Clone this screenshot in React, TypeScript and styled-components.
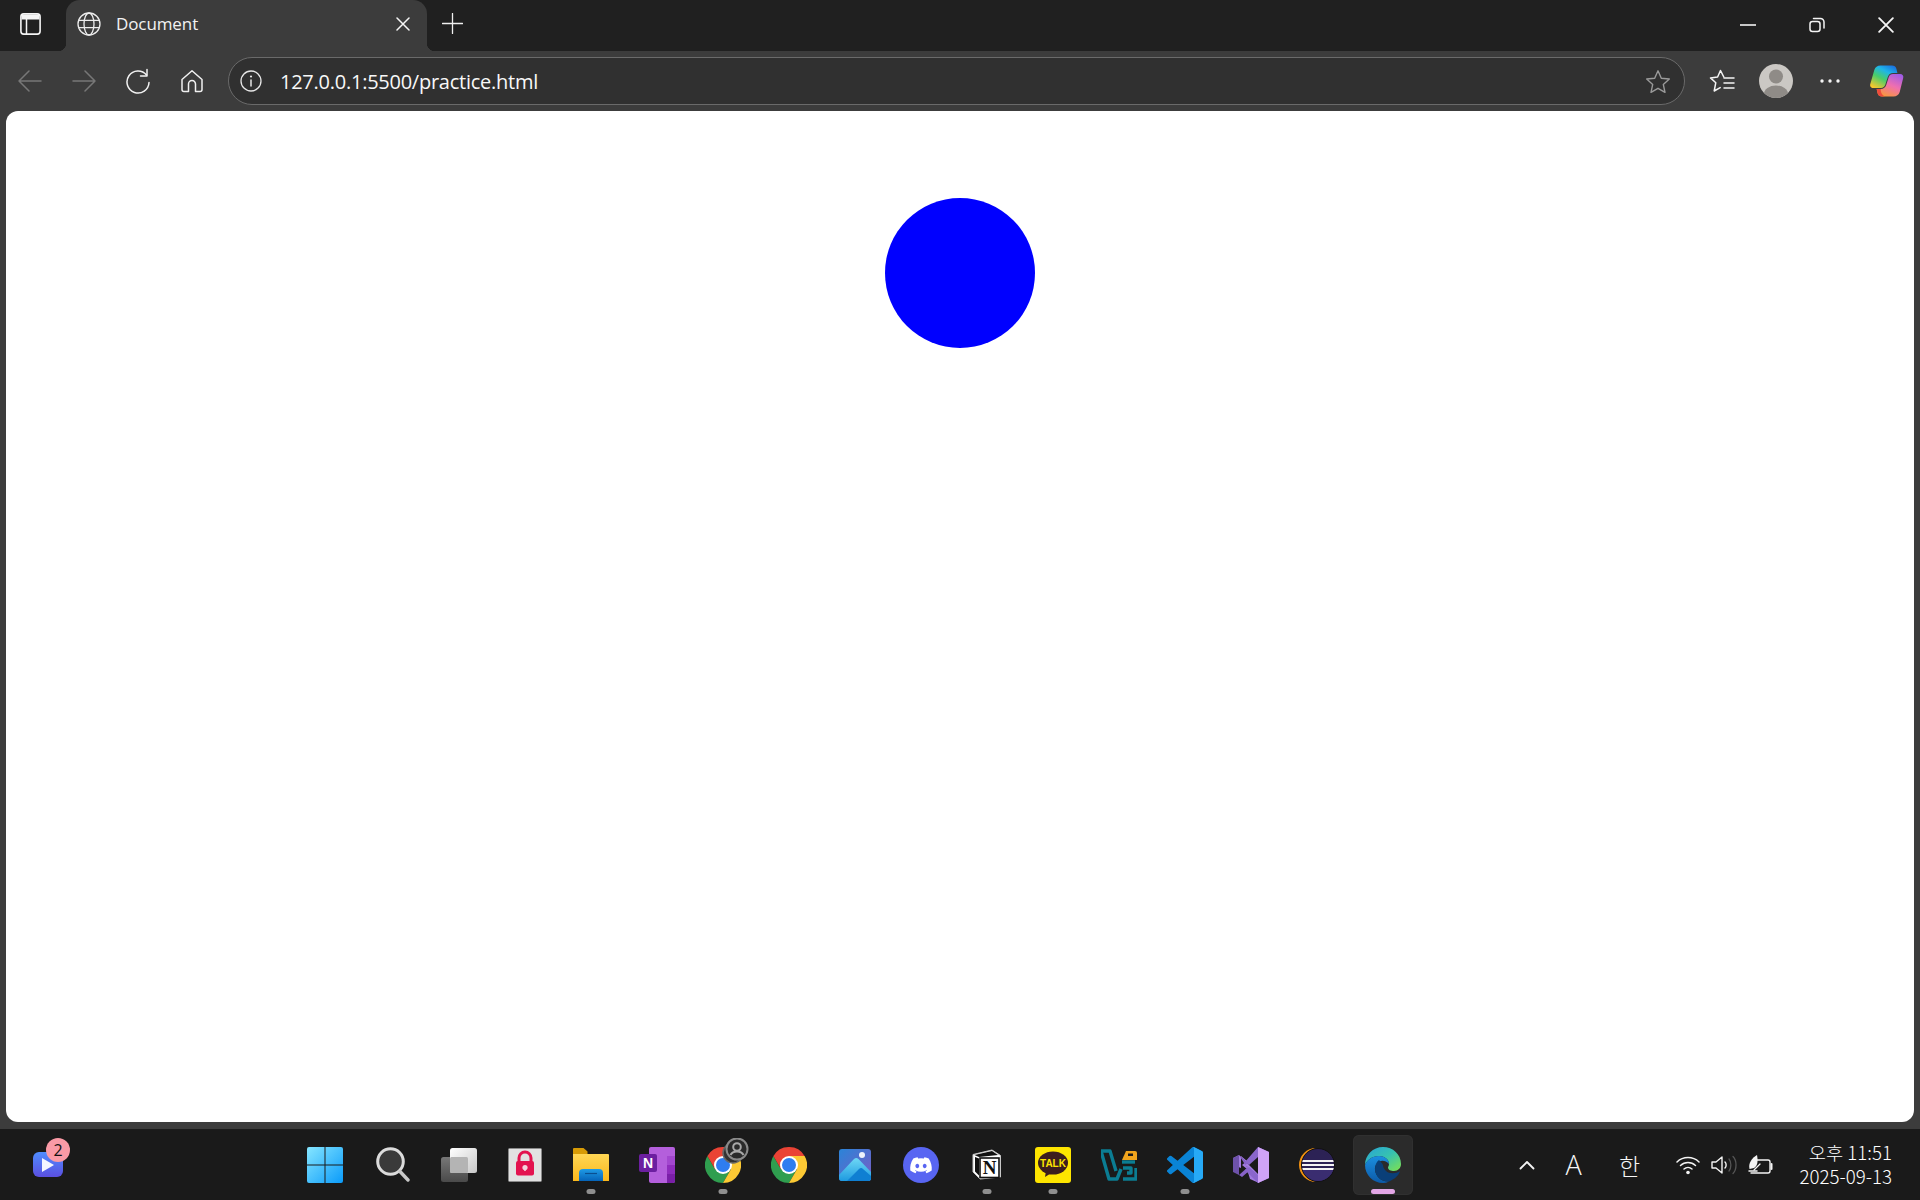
import React from "react";
import styled, { createGlobalStyle } from "styled-components";

const Global = createGlobalStyle`
  html, body { margin: 0; padding: 0; background: #1a1a1a; }
  #root { width: 1920px; height: 1200px; overflow: hidden; }
  * { box-sizing: border-box; }
`;

const Page = styled.div`
  width: 1920px; height: 1200px; display: flex; flex-direction: column;
  font-family: "Open Sans", "Liberation Sans", sans-serif; color: #fff;
`;
const TabStrip = styled.header`
  height: 51px; background: #202020; display: flex; flex: none;
`;
const SidebarButton = styled.div`
  width: 66px; height: 48px; display: flex; align-items: center; justify-content: center; padding-right: 6px;
`;
const Tab = styled.div`
  position: relative; width: 361px; height: 51px; background: #3c3c3c; border-radius: 14px 14px 0 0;
  display: flex; align-items: center; padding: 0 17px 3px 11px;
  &::before, &::after { content: ""; position: absolute; bottom: 0; width: 8px; height: 8px; }
  &::before { left: -8px; background: radial-gradient(circle at 0 0, transparent 8px, #3c3c3c 8.5px); }
  &::after { right: -8px; background: radial-gradient(circle at 100% 0, transparent 8px, #3c3c3c 8.5px); }
`;
const TabTitle = styled.span`
  flex: 1; margin: 0 0 2px 15px; font-size: 17px; color: #f2f2f2; letter-spacing: -0.1px;
`;
const NewTab = styled.div`
  width: 50px; height: 46px; display: flex; align-items: center; justify-content: center;
`;
const WindowControls = styled.div` margin-left: auto; display: flex; `;
const WindowButton = styled.div`
  width: 69px; height: 49px; display: flex; align-items: center; justify-content: center;
`;
const Toolbar = styled.nav`
  height: 60px; background: #3c3c3c; display: flex; align-items: center; padding: 0 9px 0 3px; flex: none;
`;
const NavButton = styled.div`
  width: 54px; height: 48px; display: flex; align-items: center; justify-content: center;
`;
const AddressBar = styled.div`
  flex: 1; height: 48px; margin: 0 10px 0 9px; border-radius: 24px; background: #303030; border: 1.5px solid #6a6a6a;
  display: flex; align-items: center; padding: 0 13px 0 11px;
`;
const UrlText = styled.span`
  flex: 1; margin-left: 18px; font-size: 20px; color: #f8f8f8; letter-spacing: -0.25px;
  font-family: "Open Sans", sans-serif;
`;
const ToolButton = styled.div<{ $nudge?: number }>`
  width: 54px; height: 48px; display: flex; align-items: center; justify-content: center;
  padding-left: ${(p) => p.$nudge ?? 0}px;
`;
const ContentFrame = styled.main`
  flex: 1; background: #3c3c3c; padding: 0 6px 7px; display: flex; min-height: 0;
`;
const Viewport = styled.section`
  flex: 1; background: #fff; border-radius: 12px; display: flex; justify-content: center; padding-top: 87px;
`;
const Circle = styled.div`
  width: 150px; height: 150px; border-radius: 50%; background: #0000ff;
`;
const Taskbar = styled.footer`
  height: 71px; flex: none; background: #1a1a1a; display: flex; align-items: center;
`;
const WidgetArea = styled.div`
  width: 297px; flex: none; padding-left: 33px; display: flex; align-items: center;
`;
const WidgetIcon = styled.div`
  position: relative; width: 30px; height: 25px; border-radius: 6px;
  background: linear-gradient(180deg, #4f8dff, #5b4fe0); display: flex; align-items: center; justify-content: center;
`;
const WidgetBadge = styled.span`
  position: absolute; left: 13px; top: -14px; width: 24px; height: 24px; border-radius: 50%; background: #fa9aa6;
  color: #111; font-size: 16px; line-height: 24px; text-align: center; font-family: "Open Sans", sans-serif;
`;
const Apps = styled.div` display: flex; gap: 6px; `;
const Slot = styled.div<{ $active?: boolean }>`
  position: relative; width: 60px; height: 60px; border-radius: 6px; display: flex; align-items: center; justify-content: center;
  background: ${(p) => (p.$active ? "#2b2b2b" : "transparent")};
  box-shadow: ${(p) => (p.$active ? "inset 0 0 0 1px #303030" : "none")};
`;
const StartMark = styled.span` display: flex; margin-right: 4px; `;
const RunDot = styled.span<{ $active?: boolean }>`
  position: absolute; bottom: 1px; left: 50%; transform: translateX(-50%); height: 5px; border-radius: 3px;
  width: ${(p) => (p.$active ? "24px" : "9px")};
  background: ${(p) => (p.$active ? "#e3a6e6" : "#8f8f8f")};
`;
const Tray = styled.div` margin-left: auto; display: flex; align-items: center; padding-right: 28px; `;
const TrayItem = styled.div<{ $w: number }>`
  width: ${(p) => p.$w}px; display: flex; align-items: center; justify-content: center;
  font-family: "Noto Sans CJK KR", "Open Sans", sans-serif; font-weight: 300; color: #f6f6f6;
`;
const ImeA = styled.span` font-size: 27px; line-height: 32px; font-family: "Open Sans", sans-serif; font-weight: 300; `;
const ImeHan = styled.span` font-size: 23px; line-height: 32px; `;
const SysGroup = styled.div` display: flex; align-items: center; gap: 11px; margin: 0 0 0 13px; width: 124px; `;
const Clock = styled.div`
  display: flex; flex-direction: column; align-items: flex-end; font-family: "Noto Sans CJK KR", sans-serif;
  font-size: 18.7px; line-height: 24px; color: #fff; font-weight: 300; margin-top: -1px;
`;
const LogoText = styled.text`
  font-family: "Liberation Sans", sans-serif; font-weight: 700;
`;
const NotionText = styled.text`
  font-family: "Liberation Serif", serif; font-weight: 700;
`;

const line = { fill: "none", stroke: "currentColor", strokeLinecap: "round" as const, strokeLinejoin: "round" as const };

const SidebarIcon = () => (
  <svg width="21" height="22" viewBox="0 0 21 22" color="#f4f4f4">
    <rect x=".9" y=".9" width="19.2" height="20.2" rx="2.8" {...line} strokeWidth="1.6" />
    <path d="M1.5 1.5h18V6.500h-18z" fill="#f4f4f4" />
    <path d="M6.500 6.500v14.500" {...line} strokeWidth="1.500" />
  </svg>
);
const GlobeIcon = () => (
  <svg width="24" height="24" viewBox="0 0 24 24" color="#ececec">
    <g {...line} strokeWidth="1.300">
      <circle cx="12" cy="12" r="11" />
      <ellipse cx="12" cy="12" rx="5" ry="11" />
      <path d="M1.800 8.300h20.400M1.800 15.700h20.400" />
    </g>
  </svg>
);
const CloseGlyph = ({ s = 14, w = 1.5 }: { s?: number; w?: number }) => (
  <svg width={s} height={s} viewBox="0 0 14 14" color="#f5f5f5">
    <path d="M1 1l12 12M13 1L1 13" {...line} strokeWidth={w} />
  </svg>
);
const PlusIcon = () => (
  <svg width="21" height="21" viewBox="0 0 21 21" color="#f0f0f0">
    <path d="M10.500 .5v20M.5 10.500h20" {...line} strokeWidth="1.300" />
  </svg>
);
const Arrow = ({ flip }: { flip?: boolean }) => (
  <svg width="24" height="22" viewBox="0 0 24 22" color="#777" style={flip ? { transform: "scaleX(-1)" } : undefined}>
    <path d="M1 11h22M11 1L1 11l10 10" {...line} strokeWidth="1.500" />
  </svg>
);
const ReloadIcon = () => (
  <svg width="26" height="26" viewBox="0 0 26 26" color="#f2f2f2">
    <path d="M21.500 7A11 11 0 1 0 24 14.500" {...line} strokeWidth="1.500" />
    <path d="M22 1.500V8h-6.500" {...line} strokeWidth="1.500" />
  </svg>
);
const HomeIcon = () => (
  <svg width="24" height="24" viewBox="0 0 24 24" color="#f0f0f0">
    <path d="M2 10.500L12 1.800l10 8.700V20.500a2 2 0 0 1-2 2h-4.500V15a3.500 3.500 0 0 0-7 0v7.500H4a2 2 0 0 1-2-2z" {...line} strokeWidth="1.500" />
  </svg>
);
const InfoIcon = () => (
  <svg width="22" height="22" viewBox="0 0 22 22" color="#e6e6e6">
    <circle cx="11" cy="11" r="10" {...line} strokeWidth="1.300" />
    <path d="M11 10v6" {...line} strokeWidth="1.500" />
    <circle cx="11" cy="6.500" r="1.100" fill="#e6e6e6" />
  </svg>
);
const StarIcon = () => (
  <svg width="26" height="25" viewBox="0 0 26 25" color="#9a9a9a">
    <path d="M13 1.800l3.300 7.400 8 .8-6 5.400 1.700 7.900-7-4-7 4 1.700-7.900-6-5.400 8-.8z" {...line} strokeWidth="1.400" />
  </svg>
);
const FavoritesIcon = () => (
  <svg width="26" height="24" viewBox="0 0 26 24" color="#f4f4f4">
    <path d="M14.800 8L11.500 1.500 8.600 8 1.500 8.900l5.300 4.800L5.200 22l6-3.400" {...line} strokeWidth="1.500" />
    <path d="M15 9h10M15 14h10M15 19h10" {...line} strokeWidth="1.500" />
  </svg>
);
const Avatar = () => (
  <svg width="34" height="34" viewBox="0 0 34 34">
    <defs><clipPath id="av"><circle cx="17" cy="17" r="17" /></clipPath></defs>
    <circle cx="17" cy="17" r="17" fill="#cbc8c4" />
    <g clipPath="url(#av)" fill="#8f8b87">
      <circle cx="17" cy="12.500" r="7" />
      <ellipse cx="17" cy="30" rx="12" ry="8.500" />
    </g>
  </svg>
);
const DotsIcon = () => (
  <svg width="20" height="4" viewBox="0 0 20 4" fill="#f4f4f4">
    <circle cx="2" cy="2" r="1.700" /><circle cx="10" cy="2" r="1.700" /><circle cx="18" cy="2" r="1.700" />
  </svg>
);
const CopilotIcon = () => (
  <svg width="34" height="32" viewBox="0 0 34 32">
    <defs>
      <linearGradient id="cp1" x1=".85" y1="0" x2=".2" y2="1">
        <stop offset="0" stopColor="#1a6fe0" /><stop offset=".3" stopColor="#1fb5e8" /><stop offset=".6" stopColor="#48cd6a" /><stop offset="1" stopColor="#f6c72e" />
      </linearGradient>
      <linearGradient id="cp2" x1=".8" y1="0" x2=".3" y2="1">
        <stop offset="0" stopColor="#a05ce6" /><stop offset=".5" stopColor="#ef6fb0" /><stop offset="1" stopColor="#f9983a" />
      </linearGradient>
    </defs>
    <path d="M10.500 .5h11.500c2.300 0 3.800 1 4.400 3.200l1 4.300h-4.200c-2.800 0-4.700 1.500-5.500 4.200l-2.400 7.600c-.7 2-2.200 3.200-4.300 3.200H3.500C1 23 -.4 21.300.3 19L4.300 5C5.200 2.100 7.400.5 10.500.5z" fill="url(#cp1)" />
    <path d="M23.500 31.500H12c-2.300 0-3.800-1-4.400-3.200l-1-4.300h4.200c2.800 0 4.700-1.500 5.500-4.200l2.400-7.600c.7-2 2.200-3.200 4.300-3.200h7c2.500 0 3.900 1.700 3.200 4L29.700 27c-.9 2.900-3.100 4.500-6.200 4.500z" fill="url(#cp2)" />
    <path d="M15 31.500h-3c-2.300 0-3.800-1-4.400-3.200L6.800 24h4c-.5 3 1.500 6.500 4.200 7.500z" fill="#ee4a3c" />
  </svg>
);

const WinLogo = () => (
  <svg width="36" height="36" viewBox="0 0 36 36">
    <defs>
      <linearGradient id="win" x1="0" y1="0" x2="1" y2="1">
        <stop offset="0" stopColor="#86e6ff" /><stop offset="1" stopColor="#0a9bfa" />
      </linearGradient>
    </defs>
    <path d="M2 0h15.500v17.500H0V2a2 2 0 0 1 2-2zM18.500 0H34a2 2 0 0 1 2 2v15.500H18.500zM0 18.500h17.500V36H2a2 2 0 0 1-2-2zM18.500 18.500H36V34a2 2 0 0 1-2 2H18.500z" fill="url(#win)" />
  </svg>
);
const SearchLogo = () => (
  <svg width="34" height="36" viewBox="0 0 34 36">
    <circle cx="14.500" cy="14.500" r="12.800" fill="#3a3a3a" stroke="#dcdcdc" strokeWidth="3" />
    <path d="M24 24.500l8 8.500" stroke="#c8c8c8" strokeWidth="3.400" strokeLinecap="round" />
  </svg>
);
const TaskViewLogo = () => (
  <svg width="36" height="34" viewBox="0 0 36 34">
    <defs>
      <linearGradient id="tvb" x1="0" y1="0" x2="0" y2="1"><stop offset="0" stopColor="#777" /><stop offset="1" stopColor="#4a4a4a" /></linearGradient>
      <linearGradient id="tvf" x1="0" y1="0" x2="1" y2="1"><stop offset="0" stopColor="#fff" /><stop offset="1" stopColor="#c8c8c8" /></linearGradient>
    </defs>
    <rect x="0" y="9" width="27" height="25" rx="2.500" fill="url(#tvb)" />
    <rect x="9" y="0" width="27" height="25" rx="2.500" fill="url(#tvf)" />
    <rect x="9" y="9" width="18" height="16" rx="1.500" fill="#b4b4b4" />
  </svg>
);
const LockLogo = () => (
  <svg width="34" height="34" viewBox="0 0 34 34">
    <rect x=".5" y=".5" width="33" height="33" rx="1" fill="#e2e2e2" stroke="#8a8a8a" />
    <path d="M11 14v-4a6 6 0 0 1 12 0v4" fill="none" stroke="#e3134f" strokeWidth="3" />
    <rect x="8" y="13" width="18" height="14.500" rx="2" fill="#e3134f" />
    <circle cx="17" cy="19.500" r="2.600" fill="#f3d4dc" />
    <path d="M16.200 20h1.600v3h-1.600z" fill="#f3d4dc" />
  </svg>
);
const FolderLogo = () => (
  <svg width="36" height="33" viewBox="0 0 36 33">
    <defs>
      <linearGradient id="fo" x1="0" y1="0" x2="0" y2="1"><stop offset="0" stopColor="#ffd755" /><stop offset="1" stopColor="#fbb81c" /></linearGradient>
      <linearGradient id="fb" x1="0" y1="0" x2="0" y2="1"><stop offset="0" stopColor="#1f9be6" /><stop offset="1" stopColor="#0563b8" /></linearGradient>
    </defs>
    <path d="M0 1a1 1 0 0 1 1-1h9.500l4 3.500v4H0z" fill="#d79b06" />
    <path d="M0 6h35a1 1 0 0 1 1 1v26H0z" fill="url(#fo)" />
    <path d="M6 33v-8a4 4 0 0 1 4-4h16a4 4 0 0 1 4 4v8z" fill="url(#fb)" />
    <path d="M12 25.500h12" stroke="#0a4f90" strokeWidth="1.200" />
  </svg>
);
const OneNoteLogo = () => (
  <svg width="36" height="36" viewBox="0 0 36 36">
    <path d="M10 2a2 2 0 0 1 2-2h22a2 2 0 0 1 2 2v32a2 2 0 0 1-2 2H12a2 2 0 0 1-2-2z" fill="#b45fdc" />
    <path d="M28 9h8v9h-8z" fill="#a347cf" /><path d="M28 18h8v9h-8z" fill="#8f2cbd" /><path d="M28 27h8v7a2 2 0 0 1-2 2h-6z" fill="#7a1fa8" />
    <rect x="0" y="7" width="18" height="18" rx="2" fill="#6c1fa0" />
    <LogoText x="9" y="21" textAnchor="middle" fontSize="14" fill="#fff">N</LogoText>
  </svg>
);
const ChromeLogo = () => (
  <svg width="36" height="36" viewBox="0 0 36 36">
    <path d="M2.410 9A18 18 0 0 0 18 36l7.800-13.500H10.200z" fill="#2f9e4f" />
    <path d="M33.590 9A18 18 0 0 1 18 36l7.800-13.500L18 9z" fill="#fcc934" />
    <path d="M2.410 9A18 18 0 0 1 33.590 9H18l-7.800 13.500z" fill="#ea4335" />
    <circle cx="18" cy="18" r="9" fill="#fff" />
    <circle cx="18" cy="18" r="7" fill="#2e7df0" />
  </svg>
);
const BadgeWrap = styled.span` position: absolute; left: 28px; top: 3px; width: 28px; height: 28px; display: flex; `;
const ProfileBadge = () => (
  <BadgeWrap>
    <svg width="28" height="28" viewBox="0 0 28 28">
      <circle cx="12" cy="15" r="10" fill="#333" stroke="#666" strokeWidth="1.500" />
      <circle cx="16" cy="11" r="10.500" fill="#2a2a2a" stroke="#8a8a8a" strokeWidth="2" />
      <circle cx="16" cy="9" r="3.800" fill="none" stroke="#a8a8a8" strokeWidth="2" />
      <path d="M9.500 17c1.500-3 3.500-3.500 6.500-3.500s5 .5 6.500 3.500" fill="none" stroke="#a8a8a8" strokeWidth="2" />
    </svg>
  </BadgeWrap>
);
const ProfileChrome = () => (
  <>
    <ChromeLogo />
    <ProfileBadge />
  </>
);
const PhotosLogo = () => (
  <svg width="32" height="32" viewBox="0 0 32 32">
    <defs>
      <linearGradient id="phb" x1="0" y1="0" x2="1" y2="1"><stop offset="0" stopColor="#2a84d8" /><stop offset="1" stopColor="#7a5cc4" /></linearGradient>
      <linearGradient id="phm" x1="0" y1="0" x2="0" y2="1"><stop offset="0" stopColor="#6fd8f5" /><stop offset="1" stopColor="#1e9ae0" /></linearGradient>
    </defs>
    <rect width="32" height="32" rx="3" fill="url(#phb)" />
    <circle cx="23" cy="6" r="3" fill="#eef3fb" />
    <path d="M0 26L15 10c1.500-1.500 3-1.500 4.500 0L32 23v6a3 3 0 0 1-3 3H3a3 3 0 0 1-3-3z" fill="url(#phm)" />
    <path d="M8 32l12-12c1.500-1.300 2.700-1.300 4 0l8 7v2a3 3 0 0 1-3 3z" fill="#0f7fd2" />
  </svg>
);
const DiscordLogo = () => (
  <svg width="36" height="36" viewBox="0 0 36 36">
    <circle cx="18" cy="18" r="18" fill="#5865f2" />
    <path d="M25.700 11.600a17 17 0 0 0-4.300-1.300l-.55 1.100a15.800 15.800 0 0 0-5.700 0l-.55-1.100a17 17 0 0 0-4.300 1.300C7.600 15.700 6.900 19.700 7.300 23.600a17 17 0 0 0 5.200 2.600l1.100-1.800-1.700-.8.400-.3a12.200 12.200 0 0 0 11.400 0l.4.300-1.700.8 1.100 1.800a17 17 0 0 0 5.200-2.600c.5-4.500-.7-8.400-3-12zM14.300 21.200c-1 0-1.900-1-1.900-2.200s.8-2.200 1.900-2.200 1.900 1 1.900 2.200-.8 2.200-1.900 2.200zm7.400 0c-1 0-1.900-1-1.900-2.200s.8-2.200 1.900-2.200 1.900 1 1.900 2.200-.9 2.200-1.900 2.200z" fill="#fff" />
  </svg>
);
const NotionLogo = () => (
  <svg width="30" height="31" viewBox="0 0 30 31">
    <path d="M1 5.500L20 1l8.500 5.500V28L8 30 1 23z" fill="#fff" stroke="#c8c8c8" strokeWidth="1" />
    <path d="M2.500 6L20 2l6 4L7 8zM3 8v14.500l4 4V9.500z" fill="#111" />
    <rect x="8" y="9" width="19" height="19.500" fill="#fff" stroke="#111" strokeWidth="1.600" />
    <NotionText x="17.500" y="25" textAnchor="middle" fontSize="19" fill="#111">N</NotionText>
  </svg>
);
const KakaoLogo = () => (
  <svg width="36" height="36" viewBox="0 0 36 36">
    <rect width="36" height="36" rx="3" fill="#fee500" />
    <ellipse cx="18" cy="16" rx="15" ry="11.500" fill="#3c1e1e" />
    <path d="M11 24l-1 6 7-4.500z" fill="#3c1e1e" />
    <LogoText x="18" y="20" textAnchor="middle" fontSize="10" fill="#fee500">TALK</LogoText>
  </svg>
);
const VsLockLogo = () => (
  <svg width="36" height="34" viewBox="0 0 36 34">
    <g fill="none" stroke="#0b7d93" strokeWidth="3.400" strokeLinejoin="round">
      <path d="M0 3h9l6 20" />
      <path d="M0 3l8 28h8l4-10" />
      <path d="M21 14h13" />
      <path d="M35 20v11H22" />
      <path d="M22 20h8v5h-4" />
    </g>
    <path d="M21 12l4-9h9a2 2 0 0 1 2 2v7z" fill="#f0a41d" />
    <rect x="27" y="5.500" width="5" height="2.500" fill="#1a1a1a" />
  </svg>
);
const VsCodeLogo = () => (
  <svg width="36" height="36" viewBox="0 0 24 24">
    <path d="M23.150 2.587L18.210.21a1.494 1.494 0 0 0-1.705.29l-9.460 8.630-4.120-3.128a.999.999 0 0 0-1.276.057L.327 7.261A1 1 0 0 0 .326 8.740L3.899 12 .326 15.260a1 1 0 0 0 .001 1.479L1.650 17.940a.999.999 0 0 0 1.276.057l4.120-3.128 9.460 8.630a1.492 1.492 0 0 0 1.704.29l4.942-2.377A1.500 1.500 0 0 0 24 20.060V3.939a1.500 1.500 0 0 0-.85-1.352zm-5.146 14.861L10.826 12l7.178-5.448v10.896z" fill="#0a84d6" />
    <path d="M16.505.5a1.494 1.494 0 0 1 1.705-.29l4.940 2.377A1.500 1.500 0 0 1 24 3.939V20.060a1.500 1.500 0 0 1-.85 1.352l-4.942 2.377a1.492 1.492 0 0 1-1.704-.29c.7.6 1.500.2 1.500-.7V1.200c0-.9-.8-1.300-1.500-.7z" fill="#27aaf6" />
  </svg>
);
const VsLogo = () => (
  <svg width="36" height="36" viewBox="0 0 36 36">
    <path d="M0 11l6-3 20 20v8l-9-4-3-10-5-4 5-4-6-5v12l-8-3z" fill="#a27be0" />
    <path d="M0 11l6-3v20l-6-3z" fill="#6e52aa" />
    <path d="M6 8l9 8-3 2 3 2-9 8 3 2 7-6z" fill="#8762c8" />
    <path d="M25 0l11 5v26l-11 5-13-13 4-3 9 8V10l-9 8-4-3z" fill="#8a66cc" />
    <path d="M25 0l11 5v26l-11 5z" fill="#cfa3f7" />
  </svg>
);
const EclipseLogo = () => (
  <svg width="36" height="36" viewBox="0 0 36 36">
    <defs><clipPath id="ec"><circle cx="19" cy="18" r="16" /></clipPath></defs>
    <path d="M17 1A17 17 0 0 0 17 35 18 18 0 0 1 17 1z" fill="#f29111" />
    <circle cx="19" cy="18" r="16.500" fill="#2c2255" stroke="#111" />
    <g clipPath="url(#ec)">
      <rect x="0" y="22" width="36" height="14" fill="#3a2d70" />
      <path d="M2 13h34v2H2zM2 17h34v2H2zM2 21h34v2H2z" fill="#f4f4f4" />
    </g>
  </svg>
);
const EdgeLogo = () => (
  <svg width="36" height="36" viewBox="0 0 36 36">
    <defs>
      <linearGradient id="ed1" x1="0" y1="0" x2="1" y2="1"><stop offset="0" stopColor="#28a3d8" /><stop offset=".5" stopColor="#36c2b0" /><stop offset="1" stopColor="#7fe24e" /></linearGradient>
      <linearGradient id="ed2" x1="0" y1="0" x2="0" y2="1"><stop offset="0" stopColor="#1b8fe0" /><stop offset="1" stopColor="#0c5aa8" /></linearGradient>
    </defs>
    <path d="M18 0c10 0 18 7.500 18 17 0 4-3 7-7 7-3 0-6-1-6-3.500 0-1 1-1.500 1-3.500 0-5-5-8-10-8C7 9 2 13 0 18 0 8 8 0 18 0z" fill="url(#ed1)" />
    <path d="M0 18C2 13 7 9 14 9c5 0 10 3 10 8-6-7-15-2-14 6 .7 6 6 12 14 11.500-2 1-4 1.500-6 1.500C8 36 0 28 0 18z" fill="url(#ed2)" />
    <path d="M14 13c-3 2-4 6-4 10 .7 6 6 12 14 11.500C30 32 34 28 35 24c-4 3-11 3-14 0-2-2-3-4-3-6-1-2-3-4-4-5z" fill="#0a3f78" />
  </svg>
);
const ChevronUp = () => (
  <svg width="16" height="10" viewBox="0 0 16 10" color="#f4f4f4">
    <path d="M1.500 8.500L8 2l6.500 6.500" {...line} strokeWidth="1.800" />
  </svg>
);
const WifiIcon = () => (
  <svg width="24" height="20" viewBox="0 0 24 20" color="#f4f4f4">
    <g {...line} strokeWidth="1.500">
      <path d="M1 7a16 16 0 0 1 22 0" />
      <path d="M4.500 10.500a11 11 0 0 1 15 0" />
      <path d="M8 14a6 6 0 0 1 8 0" />
    </g>
    <circle cx="12" cy="17.500" r="1.800" fill="#f4f4f4" />
  </svg>
);
const SpeakerIcon = () => (
  <svg width="26" height="22" viewBox="0 0 26 22" color="#f4f4f4">
    <path d="M1 8h4l6-5v16l-6-5H1z" {...line} strokeWidth="1.400" />
    <path d="M14 8c1.500 1.500 1.500 4.500 0 6" {...line} strokeWidth="1.400" />
    <path d="M18 5c2.500 3 2.500 9 0 12M22 2.500c4 4 4 13 0 17" {...line} strokeWidth="1.300" color="#555" />
  </svg>
);
const BatteryIcon = () => (
  <svg width="26" height="22" viewBox="0 0 26 22" color="#f4f4f4">
    <path d="M7 6h13a2 2 0 0 1 2 2v9a2 2 0 0 1-2 2H3" {...line} strokeWidth="1.400" />
    <path d="M23.500 10v5" {...line} strokeWidth="2" />
    <path d="M1.500 15C0 9 4 4 9 1c1 5 1 11-3 13z" fill="#f4f4f4" />
    <path d="M12 10l-6 6" {...line} strokeWidth="1.200" />
    <path d="M1 17h8" {...line} strokeWidth="1.500" />
  </svg>
);
const PlayIcon = () => (
  <svg width="14" height="16" viewBox="0 0 14 16"><path d="M1 1l12 7-12 7z" fill="#f4f6ff" /></svg>
);

const apps: { key: string; node: React.ReactNode; run?: boolean; active?: boolean }[] = [
  { key: "win", node: <StartMark><WinLogo /></StartMark> },
  { key: "search", node: <SearchLogo /> },
  { key: "tv", node: <TaskViewLogo /> },
  { key: "lock", node: <LockLogo /> },
  { key: "folder", node: <FolderLogo />, run: true },
  { key: "onenote", node: <OneNoteLogo /> },
  { key: "chromep", node: <ProfileChrome />, run: true },
  { key: "chrome", node: <ChromeLogo /> },
  { key: "photos", node: <PhotosLogo /> },
  { key: "discord", node: <DiscordLogo /> },
  { key: "notion", node: <NotionLogo />, run: true },
  { key: "kakao", node: <KakaoLogo />, run: true },
  { key: "vslock", node: <VsLockLogo /> },
  { key: "vscode", node: <VsCodeLogo />, run: true },
  { key: "vs", node: <VsLogo /> },
  { key: "eclipse", node: <EclipseLogo /> },
  { key: "edge", node: <EdgeLogo />, run: true, active: true },
];

export default function App() {
  return (
    <Page>
      <Global />
      <TabStrip>
        <SidebarButton><SidebarIcon /></SidebarButton>
        <Tab>
          <GlobeIcon />
          <TabTitle>Document</TabTitle>
          <CloseGlyph />
        </Tab>
        <NewTab><PlusIcon /></NewTab>
        <WindowControls>
          <WindowButton><svg width="16" height="2" viewBox="0 0 16 2"><path d="M0 1h16" stroke="#f4f4f4" strokeWidth="1.600" /></svg></WindowButton>
          <WindowButton>
            <svg width="16" height="16" viewBox="0 0 16 16" color="#f4f4f4">
              <rect x="1" y="4.500" width="10" height="10" rx="2.500" {...line} strokeWidth="1.500" />
              <path d="M4.500 1.500h7A3.500 3.500 0 0 1 15 5v6" {...line} strokeWidth="1.500" />
            </svg>
          </WindowButton>
          <WindowButton><CloseGlyph s={16} w={1.6} /></WindowButton>
        </WindowControls>
      </TabStrip>
      <Toolbar>
        <NavButton><Arrow /></NavButton>
        <NavButton><Arrow flip /></NavButton>
        <NavButton><ReloadIcon /></NavButton>
        <NavButton><HomeIcon /></NavButton>
        <AddressBar>
          <InfoIcon />
          <UrlText>127.0.0.1:5500/practice.html</UrlText>
          <StarIcon />
        </AddressBar>
        <ToolButton><FavoritesIcon /></ToolButton>
        <ToolButton><Avatar /></ToolButton>
        <ToolButton><DotsIcon /></ToolButton>
        <ToolButton $nudge={6}><CopilotIcon /></ToolButton>
      </Toolbar>
      <ContentFrame>
        <Viewport><Circle /></Viewport>
      </ContentFrame>
      <Taskbar>
        <WidgetArea>
          <WidgetIcon><PlayIcon /><WidgetBadge>2</WidgetBadge></WidgetIcon>
        </WidgetArea>
        <Apps>
          {apps.map((a) => (
            <Slot key={a.key} $active={a.active}>
              {a.node}
              {a.run && <RunDot $active={a.active} />}
            </Slot>
          ))}
        </Apps>
        <Tray>
          <TrayItem $w={48}><ChevronUp /></TrayItem>
          <TrayItem $w={46}><ImeA>A</ImeA></TrayItem>
          <TrayItem $w={66}><ImeHan>한</ImeHan></TrayItem>
          <SysGroup><WifiIcon /><SpeakerIcon /><BatteryIcon /></SysGroup>
          <Clock><span>오후 11:51</span><span>2025-09-13</span></Clock>
        </Tray>
      </Taskbar>
    </Page>
  );
}
